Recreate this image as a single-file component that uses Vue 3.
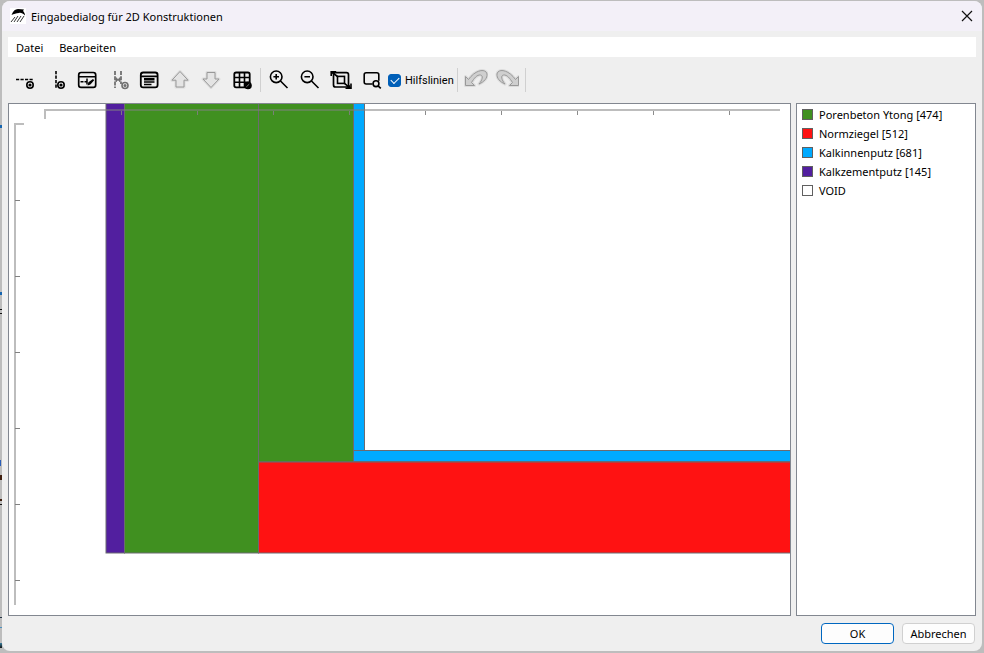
<script setup>
import { ref } from 'vue'

const menus = ['Datei', 'Bearbeiten']
const guides = ref(true)
const materials = [
  { name: 'Porenbeton Ytong [474]', tone: 'green' },
  { name: 'Normziegel [512]', tone: 'red' },
  { name: 'Kalkinnenputz [681]', tone: 'blue' },
  { name: 'Kalkzementputz [145]', tone: 'violet' },
  { name: 'VOID', tone: 'void' }
]
const ticksX = [112, 188, 264, 340, 416, 492, 568, 644, 720]
const ticksY = [96, 172, 248, 324, 400, 476]
</script>

<template>
  <div class="backdrop">
    <section class="dialog" aria-labelledby="dialog-title">
      <header class="titlebar">
        <svg class="logo" viewBox="0 0 16 16" aria-hidden="true">
          <rect width="16" height="16" fill="#fff" />
          <path d="M1.5 7C3 3 5 1 8 1l6 .5-1 1.5c1 1 2 2.5 2 4.5-2-2-4-3-6-2.5-3 .5-5 .5-7.5 2z" fill="#000" />
          <path d="M5 9l-4 5M8 8l-4 6M11 8l-4 6M14 8l-4 6" stroke="#333" stroke-width="1" fill="none" />
        </svg>
        <h1 id="dialog-title">Eingabedialog für 2D Konstruktionen</h1>
        <button class="close" type="button" aria-label="Schließen">
          <svg viewBox="0 0 12 12"><path d="M1 1l10 10M11 1L1 11" stroke="#111" stroke-width="1.2" /></svg>
        </button>
      </header>

      <div class="content">
        <nav class="menubar">
          <button v-for="m in menus" :key="m" type="button">{{ m }}</button>
        </nav>

        <div class="toolbar">
          <button type="button" aria-label="Horizontale Linie einfügen">
            <svg viewBox="0 0 24 24">
              <path d="M3 11.5h17" class="s" stroke-width="1.6" stroke-dasharray="3.2 1.3" />
              <circle cx="17" cy="17" r="3.2" class="s" stroke-width="1.6" /><circle cx="17" cy="17" r="1.6" />
            </svg>
          </button>
          <button type="button" aria-label="Vertikale Linie einfügen">
            <svg viewBox="0 0 24 24">
              <path d="M12 3v17" class="s" stroke-width="1.6" stroke-dasharray="3.2 1.3" />
              <circle cx="17" cy="17" r="3.2" class="s" stroke-width="1.6" /><circle cx="17" cy="17" r="1.6" />
            </svg>
          </button>
          <button type="button" aria-label="Abstand bearbeiten">
            <svg viewBox="0 0 24 24">
              <rect x="3.7" y="4.5" width="17" height="14.8" rx="2.4" class="s" stroke-width="1.7" />
              <path d="M4 8.8h16" class="s" stroke-width="1.6" />
              <path d="M5.5 13.7h3M9.5 13.7h3M12 10.5v6" class="s" stroke-width="1.5" />
              <path d="M12.6 17.5l.8-3.3 4.6-3.2 1.2 1.2-3.8 4.2z" />
            </svg>
          </button>
          <button type="button" aria-label="Linien zusammenführen" class="muted">
            <svg viewBox="0 0 24 24">
              <path d="M9 3v17M15 3v13" class="s" stroke-width="1.8" stroke-dasharray="4 1.2" />
              <path d="M9 11.7h6M10 9.5v4.4l2-2.2zM14 9.5v4.4l-2-2.2z" stroke="currentColor" stroke-width=".8" />
              <circle cx="19" cy="17.5" r="3" class="s" stroke-width="1.6" /><circle cx="19" cy="17.5" r="1.5" />
            </svg>
          </button>
          <button type="button" aria-label="Material zuweisen">
            <svg viewBox="0 0 24 24">
              <rect x="3.8" y="4.5" width="16.8" height="14.9" rx="2.4" class="s" stroke-width="1.8" />
              <path d="M4 8.300h16" class="s" stroke-width="1.7" />
              <path d="M7 10h10.5v2.6H7zM7 13.3h10.5v1.5H7zM7 15.7h7.5v1.500H7z" />
            </svg>
          </button>
          <button type="button" aria-label="Nach oben">
            <svg viewBox="0 0 24 24">
              <path d="M12 3.5l8 8.7h-4V19H8v-6.8H4z" class="halo" />
              <path d="M12 3.5l8 8.7h-4V19H8v-6.8H4z" class="arrow" />
            </svg>
          </button>
          <button type="button" aria-label="Nach unten">
            <svg viewBox="0 0 24 24">
              <path d="M12 19.5l8-8.5h-4V4.500H8V11H4z" class="halo" />
              <path d="M12 19.5l8-8.5h-4V4.500H8V11H4z" class="arrow" />
            </svg>
          </button>
          <button type="button" aria-label="Raster">
            <svg viewBox="0 0 24 24">
              <rect x="4.3" y="4.5" width="15.4" height="14.8" rx="1.8" class="s" stroke-width="1.8" />
              <path d="M9.5 4.5v14.6M14.5 4.5v14.6M4.3 9.5h15M4.3 14.3h15" class="s" stroke-width="1.6" />
              <circle cx="18" cy="17.5" r="3.8" /><path d="M16.3 18.9l3-2.8" stroke="#888" stroke-width=".9" />
            </svg>
          </button>
          <span class="sep"></span>
          <button type="button" aria-label="Vergrößern">
            <svg viewBox="0 0 24 24">
              <circle cx="9.2" cy="8.8" r="5.8" class="s" stroke-width="1.6" />
              <path d="M13.5 13l7 7M6.4 8.800H12M9.2 6v5.6" class="s" stroke-width="1.6" />
            </svg>
          </button>
          <button type="button" aria-label="Verkleinern">
            <svg viewBox="0 0 24 24">
              <circle cx="9.2" cy="8.8" r="5.8" class="s" stroke-width="1.6" />
              <path d="M13.5 13l7 7M6.4 8.800H12" class="s" stroke-width="1.6" />
            </svg>
          </button>
          <button type="button" aria-label="Alles anzeigen">
            <svg viewBox="0 0 24 24">
              <rect x="4.5" y="4.7" width="15" height="14.3" rx="2" class="s" stroke-width="1.7" />
              <rect x="8.5" y="8.4" width="7" height="7" class="s" stroke-width="1.6" />
              <path d="M2.2 8V3.8h5M22 15.5v4.7h-5.5M2.5 4L8.5 8.5M15.5 15.3l6 5" class="s" stroke-width="1.6" />
              <path d="M3 4h3.5L4.5 7zM21.5 19.8h-4l3.5-3z" />
            </svg>
          </button>
          <button type="button" aria-label="Bereich vergrößern">
            <svg viewBox="0 0 24 24">
              <path d="M12.5 16H6.2a2 2 0 0 1-2-2V6.8a2 2 0 0 1 2-2h10.6a2 2 0 0 1 2 2v6" class="s" stroke-width="1.6" />
              <circle cx="16" cy="15.7" r="2.9" class="s" stroke-width="1.6" />
              <path d="M18 17.8l2.8 2.6" class="s" stroke-width="1.6" />
            </svg>
          </button>
          <label class="check">
            <input v-model="guides" type="checkbox" />
            <span>Hilfslinien</span>
          </label>
          <span class="sep"></span>
          <button type="button" aria-label="Rückgängig">
            <svg viewBox="0 0 24 24">
              <path d="M1.5 8.5v9h9l-3-3C10 10.5 13 6.5 16.5 7c3 .5 2 5-1.5 9 5-2 8.500-6 8-10C22 .5 12 1 4.500 11.500z" class="halo" />
              <path d="M1.5 8.5v9h9l-3-3C10 10.5 13 6.5 16.5 7c3 .5 2 5-1.5 9 5-2 8.500-6 8-10C22 .5 12 1 4.500 11.500z" class="curve" />
            </svg>
          </button>
          <button type="button" aria-label="Wiederholen">
            <svg viewBox="0 0 24 24">
              <path d="M23.5 8.5v9h-9l3-3C15 10.5 12 6.5 8.500 7c-3 .5-2 5 1.500 9-5-2-8.500-6-8-10C3 .5 13 1 20.500 11.500z" class="halo" />
              <path d="M23.5 8.5v9h-9l3-3C15 10.5 12 6.5 8.500 7c-3 .5-2 5 1.500 9-5-2-8.500-6-8-10C3 .5 13 1 20.500 11.500z" class="curve" />
            </svg>
          </button>
          <span class="sep"></span>
        </div>

        <main class="work">
          <div class="canvas">
            <svg width="100%" height="100%" role="img" aria-label="Konstruktion">
              <g stroke="#6b6b70" stroke-width="1">
                <rect x="97" y="-5" width="18.5" height="454" fill="#521f9f" />
                <rect x="115.5" y="-5" width="134" height="454" fill="#409020" />
                <rect x="249.5" y="-5" width="95" height="363" fill="#409020" />
                <rect x="344.5" y="-5" width="11" height="352" fill="#00aaff" />
                <rect x="344.5" y="346.5" width="2000" height="11" fill="#00aaff" />
                <rect x="249.5" y="358" width="2000" height="91" fill="#ff1212" />
              </g>
              <g v-if="guides" fill="#808080" fill-opacity=".52">
                <rect x="35" y="5" width="736" height="2" />
                <rect x="35" y="7" width="2" height="8" />
                <rect v-for="x in ticksX" :key="x" :x="x" y="7" width="1" height="4" fill-opacity=".9" />
                <rect x="5" y="19" width="2" height="482" />
                <rect x="7" y="19" width="8" height="2" />
                <rect v-for="y in ticksY" :key="y" x="6" :y="y" width="5" height="1" fill-opacity="1" />
              </g>
            </svg>
          </div>
          <ul class="legend">
            <li v-for="m in materials" :key="m.name"><i :class="m.tone"></i>{{ m.name }}</li>
          </ul>
        </main>

        <footer class="actions">
          <button type="button" class="primary">OK</button>
          <button type="button">Abbrechen</button>
        </footer>
      </div>
    </section>
  </div>
</template>

<style>
body { background: #c4c4c4; }
</style>

<style scoped>
* { box-sizing: border-box; }
.backdrop {
  display: flex;
  min-height: 100vh;
  padding: 1px 2px 2px;
  /* fragments of the window behind show along the left edge */
  background:
    linear-gradient(#1565b0, #1565b0) 0 125px / 2px 3px no-repeat,
    linear-gradient(#1565b0, #1565b0) 0 292px / 2px 3px no-repeat,
    linear-gradient(#111, #111) 0 309px / 2px 1px no-repeat,
    linear-gradient(#111, #111) 0 313px / 2px 1px no-repeat,
    linear-gradient(#2a5db8, #2a5db8) 0 460px / 1px 6px no-repeat,
    linear-gradient(#402010, #402010) 0 475px / 2px 5px no-repeat,
    linear-gradient(#402010, #402010) 0 499px / 2px 2px no-repeat,
    linear-gradient(#111, #111) 0 504px / 2px 1px no-repeat,
    linear-gradient(#234, #234) 0 617px / 2px 1px no-repeat,
    linear-gradient(#4a90c0, #4a90c0) 0 627px / 2px 1px no-repeat,
    linear-gradient(#3a80a0, #111) 0 643px / 2px 5px no-repeat,
    #bdbdbd;
  font-family: "Noto Sans", sans-serif;
  font-size: 11px;
  line-height: 19px;
  color: #000;
}
.dialog {
  flex: 1;
  min-width: 0;
  display: flex;
  flex-direction: column;
  border-radius: 8px;
  background: #efefef;
  overflow: hidden;
}
button { font: inherit; color: inherit; margin: 0; padding: 0; border: 0; background: none; }
.titlebar {
  display: flex;
  align-items: center;
  height: 30px;
  padding: 0 9px 0 8px;
  background: #f3f0f8;
}
.logo { width: 16px; height: 16px; }
h1 { flex: 1; margin: 0 0 0 5px; font-size: 11px; font-weight: 400; line-height: 17px; }
.close { display: flex; }
.close svg { width: 12px; height: 12px; }
.content { flex: 1; display: flex; flex-direction: column; padding: 6px 6px 7px; }
.menubar { display: flex; gap: 16px; height: 20px; padding: 0 8px; background: #fff; }
.toolbar { display: flex; align-items: center; height: 46px; padding-left: 1px; }
.toolbar button { display: flex; justify-content: center; width: 31px; flex: none; }
.toolbar button svg { width: 24px; height: 24px; fill: currentColor; }
.toolbar .s { fill: none; stroke: currentColor; }
.toolbar .muted { color: #707070; }
.toolbar .halo { fill: none; stroke: #dcdcdc; stroke-width: 3; stroke-linejoin: round; }
.toolbar .arrow { fill: #e4e4e4; stroke: #989898; stroke-width: 1; stroke-linejoin: round; }
.toolbar .curve { fill: #cfcfcf; stroke: #999; stroke-width: 1; stroke-linejoin: round; }
.sep { width: 1px; height: 24px; margin: 0 2px 0 3px; background: #d0d0d0; flex: none; }
.check {
  display: flex;
  align-items: center;
  gap: 4px;
  flex: none;
  width: 66px;
  margin-left: 1px;
  font-family: Roboto, sans-serif;
  line-height: 17px;
  white-space: nowrap;
}
.check input {
  appearance: none;
  flex: none;
  width: 13px;
  height: 13px;
  margin: 0;
  border-radius: 3px;
  border: 1px solid #005fb8;
  background: #fff;
  display: grid;
  place-items: center;
}
.check input:checked { background: #005fb8; }
.check input:checked::before {
  content: "";
  width: 7px;
  height: 4px;
  margin-bottom: 2px;
  border: solid #fff;
  border-width: 0 0 1px 1px;
  transform: rotate(-45deg);
}
.work { flex: 1; display: flex; gap: 5px; min-height: 0; }
.canvas, .legend { border: 1px solid #828790; background: #fff; }
.canvas { flex: 1; min-width: 0; overflow: hidden; }
.canvas svg { display: block; }
.legend { width: 180px; margin: 0; padding: 1px 5px; list-style: none; }
.legend li { display: flex; align-items: center; gap: 6px; }
.legend i { width: 11px; height: 11px; border: 1px solid #606060; }
.green { background: #409020; }
.red { background: #ff1212; }
.blue { background: #00aaff; }
.violet { background: #521f9f; }
.void { background: #fff; }
.actions { display: flex; justify-content: flex-end; gap: 8px; padding: 7px 1px 0 0; }
.actions button {
  width: 73px;
  height: 21px;
  border: 1px solid #d0d0d0;
  border-radius: 4px;
  background: #fdfdfd;
}
.actions .primary { border-color: #0067c0; }
</style>
